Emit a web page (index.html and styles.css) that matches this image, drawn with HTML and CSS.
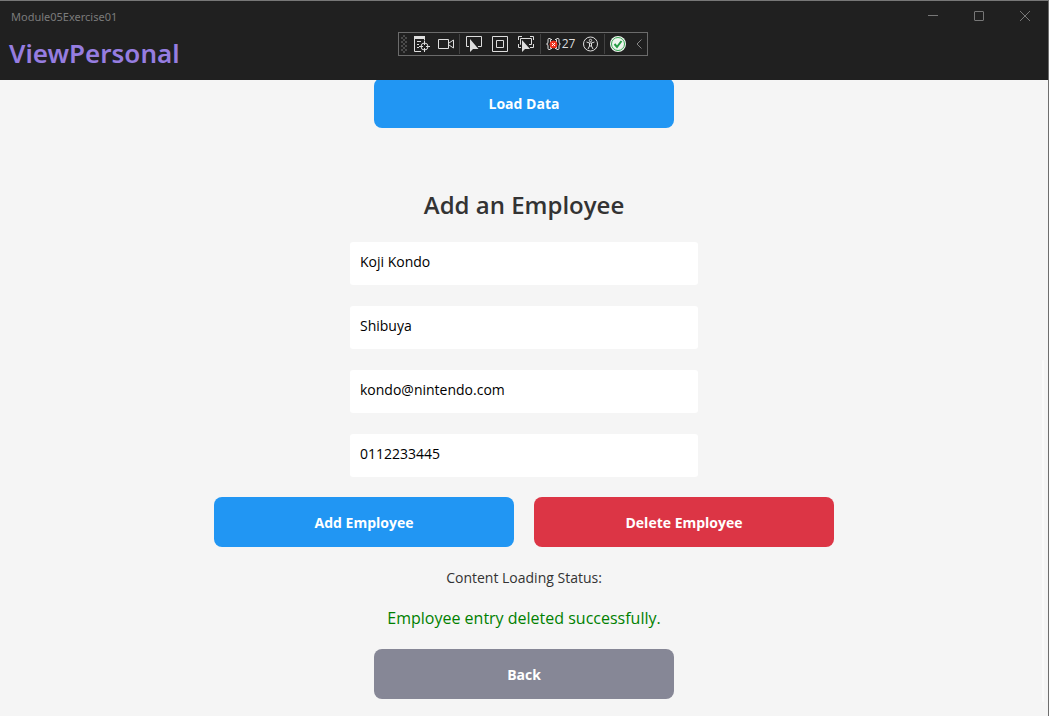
FILE: index.html
```html
<!DOCTYPE html>
<html lang="en">
<head>
<meta charset="utf-8">
<meta name="viewport" content="width=device-width, initial-scale=1">
<title>Module05Exercise01</title>
<link rel="stylesheet" href="styles.css">
</head>
<body>
<div class="window">
  <header class="header">
    <div class="titlebar">
      <span class="app-name">Module05Exercise01</span>
      <div class="window-controls">
        <button type="button" class="control" aria-label="Minimize"><svg width="10" height="10" viewBox="0 0 10 10"><path d="M0 4.500H10"/></svg></button>
        <button type="button" class="control" aria-label="Maximize"><svg width="10" height="10" viewBox="0 0 10 10"><rect x=".5" y=".5" width="9" height="9" rx=".5"/></svg></button>
        <button type="button" class="control" aria-label="Close"><svg width="10" height="10" viewBox="0 0 10 10"><path d="M0 0L10 10M10 0L0 10"/></svg></button>
      </div>
    </div>
    <h1 class="page-title">ViewPersonal</h1>
    <div class="debug-layer">
      <div class="debug-bar" role="toolbar" aria-label="Debug tools">
        <span class="grip"></span>
        <div class="group">
          <button type="button" class="tool" aria-label="Live visual tree"><svg width="16" height="16" viewBox="0 0 16 16"><path class="fill" d="M0 0h11v3H0z"/><path d="M.5 3v12.500H7M10.500 3v1.500M3 5.500h4M3 8.500h2M3 11.500h2"/><circle cx="10.500" cy="10.500" r="3.500"/><path d="M10.500 5v4M10.500 12v4M5 10.500h4M12 10.500h4"/></svg></button>
          <button type="button" class="tool" aria-label="Camera"><svg width="16" height="16" viewBox="0 0 16 16"><path d="M.5 3.500h10v9H.5zM11 7l4.500-3v8L11 9"/></svg></button>
        </div>
        <span class="divider"></span>
        <div class="group group-wide">
          <button type="button" class="tool" aria-label="Select element"><svg width="16" height="16" viewBox="0 0 16 16"><path d="M3 10.500H.5V.5h15v10H12"/><path class="fill" d="M4 3v13l3-3h5.500z"/></svg></button>
          <button type="button" class="tool" aria-label="Display layout adorners"><svg width="16" height="16" viewBox="0 0 16 16"><path d="M.5 .5h15v15H.5zM4.500 4.500h7v7h-7z"/></svg></button>
          <button type="button" class="tool" aria-label="Track focused element"><svg width="16" height="16" viewBox="0 0 16 16"><path d="M.5 4V.5H4M12 .5h3.500V4M.5 8v3.500H3M15.500 8v3.500H12M3 8.500h-.5v-6h11v6H11"/><path class="fill" d="M4 4v12l3-3h5z"/></svg></button>
        </div>
        <span class="divider"></span>
        <button type="button" class="tool tool-count" aria-label="Binding failures: 27"><svg width="16" height="16" viewBox="0 0 16 16"><path d="M4.500 2.500H3q-1 0-1 1V6q0 2-1.500 2 1.500 0 1.500 2v2.500q0 1 1 1h1.500M10.500 2.500H12q1 0 1 1V6q0 2 1.500 2-1.500 0-1.500 2v2.500q0 1-1 1h-1.500M6 3.500H4.500v9H6M9 3.500h1.500v9H9"/><circle class="alert" cx="7.500" cy="8.500" r="3.500"/><path class="white" d="M6 7l3 3M9 7l-3 3"/></svg><span>27</span></button>
        <button type="button" class="tool tool-access" aria-label="Accessibility"><svg width="16" height="16" viewBox="0 0 16 16"><circle cx="7.500" cy="8" r="7"/><circle cx="7.500" cy="4.500" r="1.200"/><path d="M3.500 6l3 1h2l3-1M6.500 7v3L5 13M8.500 7v3l1.500 3M6.500 10h2"/></svg></button>
        <span class="divider"></span>
        <button type="button" class="tool" aria-label="Hot reload status"><svg width="16" height="16" viewBox="0 0 16 16"><circle class="ok" cx="8" cy="8" r="8"/><circle class="ok-ring" cx="8" cy="8" r="6.500"/><path class="ok-mark" d="M4.500 8l2.500 3 4.500-6"/></svg></button>
        <button type="button" class="tool tool-collapse" aria-label="Collapse"><svg width="6" height="10" viewBox="0 0 6 10"><path d="M5.500 .5L1 5l4.500 4.500"/></svg></button>
      </div>
    </div>
  </header>
  <main class="content">
    <div class="page">
      <button type="button" class="button primary">Load Data</button>
      <form class="employee-form">
        <h2 class="form-title">Add an Employee</h2>
        <input class="field" type="text" aria-label="Name" value="Koji Kondo">
        <input class="field" type="text" aria-label="Address" value="Shibuya">
        <input class="field" type="email" aria-label="Email" value="kondo@nintendo.com">
        <input class="field" type="tel" aria-label="Contact number" value="0112233445">
        <div class="actions">
          <button type="button" class="button primary">Add Employee</button>
          <button type="button" class="button danger">Delete Employee</button>
        </div>
      </form>
      <p class="status-label">Content Loading Status:</p>
      <p class="status-message" role="status">Employee entry deleted successfully.</p>
      <button type="button" class="button neutral">Back</button>
    </div>
    <span class="scroll-thumb"></span>
  </main>
</div>
</body>
</html>
```
FILE: styles.css
```css
* { box-sizing: border-box; }

body {
  margin: 0;
  background: #f5f5f5;
  font-family: "Open Sans", "Noto Sans", sans-serif;
}

button { padding: 0; border: 0; font: inherit; background: none; }

.window {
  display: flex;
  flex-direction: column;
  height: 100vh;
  border-top: 1px solid #777;
  border-right: 1px solid #6e6e6e;
}

.header {
  position: relative;
  flex: none;
  padding-bottom: 6px;
  background: #202020;
}

.titlebar {
  display: flex;
  justify-content: space-between;
  height: 31px;
  padding-left: 11px;
  color: #7b7b7b;
  font-family: "Noto Sans", sans-serif;
  font-size: 11px;
  line-height: 32px;
}

.window-controls { display: flex; }

.control {
  display: grid;
  place-items: center;
  width: 46px;
  height: 30px;
}

.control svg, .tool svg {
  display: block;
  fill: none;
  stroke: currentColor;
}

.control { color: #777; }

.page-title {
  margin: 0;
  padding-left: 9px;
  color: #967de0;
  font-family: "Noto Sans", sans-serif;
  font-size: 26px;
  font-weight: 600;
  line-height: 42px;
}

.debug-layer {
  position: absolute;
  top: 31px;
  left: 0;
  right: 2px;
  display: flex;
  justify-content: center;
  pointer-events: none;
}

.debug-bar {
  display: flex;
  align-items: center;
  gap: 5px;
  height: 24px;
  padding: 0 5px 0 2px;
  border: 1px solid #6b6b6b;
  color: #dedede;
  pointer-events: auto;
}

.grip {
  width: 6px;
  height: 18px;
  margin-right: 2px;
  background: repeating-conic-gradient(#4a4a4a 0 25%, #202020 0 50%) 0 0 / 4px 4px;
}

.group { display: flex; gap: 8px; }
.group-wide { gap: 10px; padding: 0 1px; }

.divider { width: 1px; height: 20px; background: #424242; }

.tool { display: flex; align-items: center; color: #dedede; }
.tool .fill { fill: currentColor; stroke: none; }
.tool .alert { fill: #f0341f; stroke: #f0341f; }
.tool .white { stroke: #fff; }
.tool .ok { fill: #eef5ee; stroke: none; }
.tool .ok-ring { stroke: #35a552; }
.tool .ok-mark { stroke: #249a43; stroke-width: 2; }

.tool-count { font-size: 12px; line-height: 16px; }
.tool-access { padding-left: 3px; }
.tool-collapse { padding-left: 5px; color: #858585; }

.content {
  position: relative;
  flex: 1;
  min-height: 0;
  overflow: hidden;
}

.page {
  display: flex;
  flex-direction: column;
  align-items: center;
  margin-top: -2px;
  padding: 0 20px 20px;
}

.button {
  flex: 0 1 auto;
  width: 300px;
  height: 50px;
  padding-top: 1px;
  border-radius: 8px;
  color: #fff;
  font-size: 14px;
  font-weight: 700;
  line-height: 20px;
}

.primary { background: #2196f3; }
.danger { background: #dc3545; }
.neutral { background: #868796; }

.employee-form {
  display: flex;
  flex-direction: column;
  align-items: center;
  gap: 21px;
  width: 100%;
  max-width: 620px;
  margin-top: 60px;
}

.form-title {
  margin: 0;
  color: #333;
  font-size: 24px;
  font-weight: 600;
  line-height: 33px;
}

.field {
  width: 348px;
  max-width: 100%;
  height: 43px;
  padding: 0 10px 4px;
  border: 0;
  border-radius: 3px;
  background: #fff;
  color: #000;
  font: inherit;
  font-size: 14px;
}

.actions {
  display: flex;
  justify-content: center;
  gap: 20px;
  width: 100%;
  margin-top: -1px;
}

.status-label, .status-message { margin: 0; }

.status-label {
  padding: 21px 0 19px;
  color: #333;
  font-size: 14px;
  line-height: 20px;
}

.status-message {
  margin-bottom: 20px;
  color: #008000;
  font-size: 16px;
  line-height: 22px;
}

.scroll-thumb {
  position: absolute;
  top: 280px;
  right: 4px;
  bottom: 14px;
  width: 2px;
  border-radius: 1px;
  background: #fafafa;
}
```
